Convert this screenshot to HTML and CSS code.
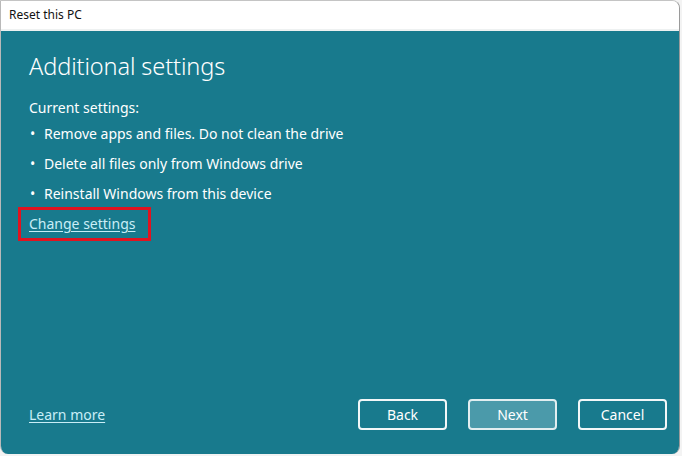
FILE: index.html
```html
<!DOCTYPE html>
<html lang="en">
<head>
    <meta charset="UTF-8">
    <title>Reset this PC</title>
    <link rel="stylesheet" href="styles.css">
</head>
<body>

    <div class="window">
        <div class="title-bar">Reset this PC</div>

        <div class="content">
            <h1>Additional settings</h1>

            <p class="label">Current settings:</p>
            <ul class="settings-list">
                <li>Remove apps and files. Do not clean the drive</li>
                <li>Delete all files only from Windows drive</li>
                <li>Reinstall Windows from this device</li>
            </ul>

            <div class="change-box">
                <a href="#" class="link">Change settings</a>
            </div>

            <div class="footer">
                <a href="#" class="link">Learn more</a>
                <div class="buttons">
                    <button class="btn">Back</button>
                    <button class="btn primary">Next</button>
                    <button class="btn">Cancel</button>
                </div>
            </div>
        </div>
    </div>

</body>
</html>
```

FILE: styles.css
```css
body {
    margin: 0;
    background-color: #f3f3f3;
    font-family: "Noto Sans", "Open Sans", sans-serif;
    width: 682px;
    height: 456px;
    overflow: hidden;
}

.window {
    width: 680px;
    height: 454px;
    display: flex;
    flex-direction: column;
    border-left: 1px solid #b9b9b9;
    border-top: 1px solid #c4c4c4;
    border-right: 1px solid #9a9a9a;
    border-radius: 0 8px 8px 8px;
    overflow: hidden;
    box-sizing: border-box;
}

.title-bar {
    height: 28px;
    background-color: #fff;
    border-bottom: 2px solid #eef1f1;
    font-size: 12px;
    color: #111;
    padding-left: 8px;
    line-height: 28px;
}

.content {
    flex: 1;
    background-color: #187a8d;
    color: #fff;
    padding: 0 0 0 28px;
    display: flex;
    flex-direction: column;
}

h1 {
    font-weight: 300;
    font-size: 23.5px;
    margin: 19px 0 0 0;
    letter-spacing: -0.1px;
}

.label {
    font-size: 14px;
    margin: 16px 0 0 0;
}

.settings-list {
    list-style: none;
    margin: 2px 0 0 0;
    padding: 0;
    font-size: 14px;
}

.settings-list li {
    height: 30px;
    line-height: 30px;
}

.settings-list li::before {
    content: "\2022";
    display: inline-block;
    width: 14px;
    padding-left: 1px;
}

.change-box {
    align-self: flex-start;
    margin: -2px 0 0 -11px;
    border: 3px solid #e1131f;
    padding: 2px 13px 4px 8px;
}

.link {
    color: #c9eef7;
    font-size: 14px;
    text-decoration: underline;
    text-underline-offset: 2px;
}

.footer {
    margin-top: auto;
    margin-bottom: 24px;
    display: flex;
    align-items: center;
    justify-content: space-between;
    padding-right: 12px;
}

.buttons {
    display: flex;
    gap: 21px;
}

.btn {
    width: 89px;
    height: 31px;
    background-color: transparent;
    border: 2px solid #f2f7f8;
    border-radius: 4px;
    color: #fff;
    font-family: "Noto Sans", "Open Sans", sans-serif;
    font-size: 14px;
}

.btn.primary {
    background-color: #4b9aaa;
    border-color: #e2eef0;
}
```
